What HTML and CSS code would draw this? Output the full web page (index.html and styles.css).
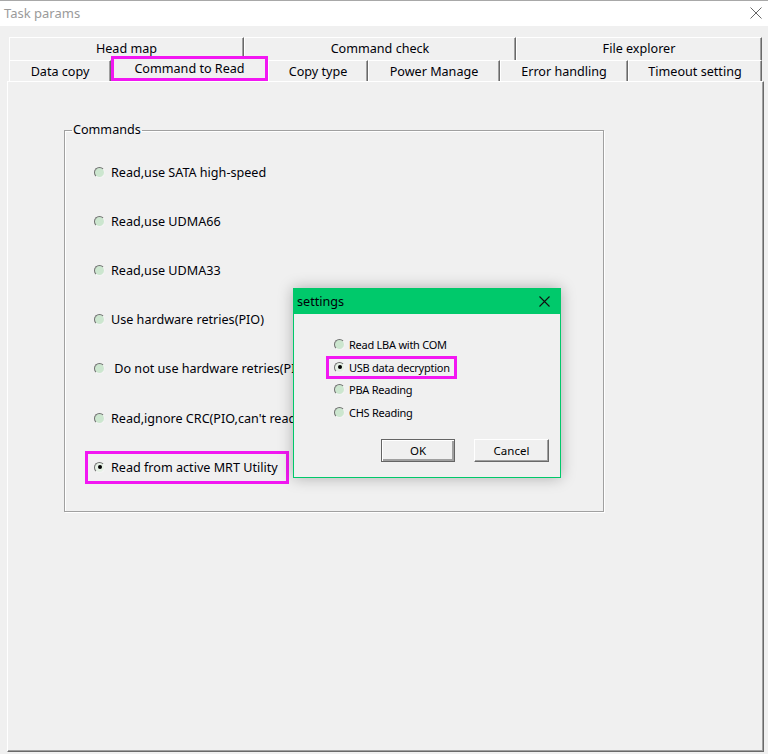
FILE: index.html
```html
<!DOCTYPE html>
<html lang="en">
<head>
  <meta charset="UTF-8">
  <title>Task params</title>
  <link rel="stylesheet" href="styles.css">
</head>
<body>
  <div class="window">
    <div class="titlebar">
      <span class="title">Task params</span>
      <svg class="close" width="12" height="12" viewBox="0 0 12 12">
        <path d="M0.5 0.5 L11.5 11.5 M11.5 0.5 L0.5 11.5" stroke="#666" stroke-width="1" fill="none"/>
      </svg>
    </div>

    <div class="tabctl">
      <div class="tabrow back">
        <div class="tab t-head">Head map</div>
        <div class="tab t-check">Command check</div>
        <div class="tab t-files">File explorer</div>
      </div>
      <div class="tabrow front">
        <div class="tab t-copy">Data copy</div>
        <div class="tab t-read active">Command to Read</div>
        <div class="tab t-type">Copy type</div>
        <div class="tab t-power">Power Manage</div>
        <div class="tab t-error">Error handling</div>
        <div class="tab t-timeout">Timeout setting</div>
      </div>

      <div class="panel">
        <fieldset class="group">
          <legend>Commands</legend>
          <ul class="options">
            <li><span class="opt"><i class="radio"></i>Read,use SATA high-speed</span></li>
            <li><span class="opt"><i class="radio"></i>Read,use UDMA66</span></li>
            <li><span class="opt"><i class="radio"></i>Read,use UDMA33</span></li>
            <li><span class="opt"><i class="radio"></i>Use hardware retries(PIO)</span></li>
            <li><span class="opt"><i class="radio"></i>&nbsp;Do not use hardware retries(PIO)</span></li>
            <li><span class="opt"><i class="radio"></i>Read,ignore CRC(PIO,can't read LBA)</span></li>
            <li><span class="opt marked"><i class="radio on"></i>Read from active MRT Utility</span></li>
          </ul>
        </fieldset>
      </div>
    </div>

    <div class="dialog">
      <div class="dlg-title">
        <span>settings</span>
        <svg width="11" height="11" viewBox="0 0 11 11">
          <path d="M0.5 0.5 L10.5 10.5 M10.5 0.5 L0.5 10.5" stroke="#111" stroke-width="1.1" fill="none"/>
        </svg>
      </div>
      <div class="dlg-body">
        <ul class="dlg-options">
          <li><span class="opt"><i class="radio"></i>Read LBA with COM</span></li>
          <li><span class="opt marked"><i class="radio on"></i>USB data decryption</span></li>
          <li><span class="opt"><i class="radio"></i>PBA Reading</span></li>
          <li><span class="opt"><i class="radio"></i>CHS Reading</span></li>
        </ul>
        <div class="dlg-buttons">
          <button class="btn default">OK</button>
          <button class="btn">Cancel</button>
        </div>
      </div>
    </div>
  </div>
</body>
</html>
```

FILE: styles.css
```css
body {
  margin: 0;
  background: #f0f0f0;
  font-family: "Noto Sans", "Open Sans", sans-serif;
  font-size: 12.6px;
  color: #000008;
}
.window {
  position: relative;
  width: 768px;
  height: 754px;
  overflow: hidden;
}
.titlebar {
  height: 25px;
  background: #fff;
  border-top: 1px solid #a8a8a8;
  display: flex;
  align-items: center;
  justify-content: space-between;
  padding: 0 6px 0 4px;
}
.title {
  color: #9a9a9a;
  font-size: 13px;
  margin-top: -1px;
}
.close {
  margin-top: -1px;
}
.tabctl {
  padding: 11px 4px 0 7px;
}
.tabrow {
  display: flex;
  margin-left: 2px;
}
.tabrow.back {
  height: 23px;
}
.tabrow.front {
  height: 21px;
  align-items: flex-end;
}
.tab {
  box-sizing: border-box;
  height: 100%;
  display: flex;
  align-items: center;
  justify-content: center;
  background: #f0f0f0;
  border-top: 1px solid #fff;
  border-left: 1px solid #fff;
  border-right: 1px solid #696969;
  box-shadow: inset -1px 0 0 #a0a0a0;
  white-space: nowrap;
}
.back .tab {
  padding-bottom: 2px;
}
.t-head { width: 235px; }
.t-check { width: 272px; }
.t-files { width: 246px; }
.t-copy { width: 102px; }
.t-read { width: 157px; }
.t-type { width: 100px; }
.t-power { width: 132px; }
.t-error { width: 128px; }
.t-timeout { width: 134px; }
.tab.active {
  height: 25px;
  border: 3px solid #f217f2;
  box-shadow: none;
  padding-bottom: 1px;
}
.panel {
  box-sizing: border-box;
  height: 671px;
  border-top: 1px solid #fff;
  border-left: 1px solid #fff;
  border-right: 1px solid #696969;
  border-bottom: 1px solid #696969;
  box-shadow: inset -1px -1px 0 #a0a0a0;
  padding: 39px 0 0 56px;
}
.group {
  box-sizing: border-box;
  width: 540px;
  height: 391px;
  margin: 0;
  padding: 0;
  border: 1px solid #a0a0a0;
  box-shadow: 1px 1px 0 #fff, inset 1px 1px 0 #fff;
}
.group legend {
  margin-left: 7px;
  padding: 0 1px;
  line-height: 18px;
}
.options {
  list-style: none;
  margin: 0;
  padding: 8.5px 0 0 29px;
}
.options li {
  height: 49.2px;
  display: flex;
  align-items: center;
}
.opt {
  display: inline-flex;
  align-items: center;
  white-space: nowrap;
}
.radio {
  box-sizing: border-box;
  width: 11px;
  height: 11px;
  border-radius: 50%;
  background: #cce6cf;
  border: 1px solid #a8a8a8;
  border-top-color: #707070;
  border-left-color: #707070;
  border-bottom-color: #f4f4f4;
  border-right-color: #f4f4f4;
  margin-right: 6px;
  display: inline-flex;
  align-items: center;
  justify-content: center;
  flex-shrink: 0;
}
.radio.on {
  background: #e6f1e6;
}
.radio.on::after {
  content: "";
  width: 4px;
  height: 4px;
  border-radius: 50%;
  background: #000;
}
.options .marked {
  box-sizing: border-box;
  height: 33px;
  margin-left: -9px;
  padding: 0 8px 0 6px;
  border: 3px solid #f217f2;
}
.dialog {
  position: absolute;
  left: 293px;
  top: 288px;
  box-sizing: border-box;
  width: 268px;
  height: 190px;
  border: 1px solid #00c86a;
  background: #f0f0f0;
  box-shadow: 0 0 14px rgba(0, 0, 0, 0.28);
  font-size: 11px;
  letter-spacing: -0.25px;
}
.dlg-title {
  height: 25px;
  background: #00c96b;
  display: flex;
  align-items: center;
  justify-content: space-between;
  padding: 0 10px 0 3px;
  font-size: 12.6px;
  letter-spacing: 0;
}
.dlg-body {
  padding: 19px 11px 0 0;
}
.dlg-options {
  list-style: none;
  margin: 0;
  padding: 0 0 0 40px;
}
.dlg-options li {
  height: 22.7px;
  display: flex;
  align-items: center;
}
.dlg-options .radio {
  margin-right: 4px;
}
.dlg-options .marked {
  box-sizing: border-box;
  height: 23px;
  margin-left: -8px;
  padding: 0 4px 0 5px;
  border: 3px solid #f217f2;
}
.dlg-buttons {
  display: flex;
  justify-content: flex-end;
  gap: 19px;
  margin-top: 15px;
}
.btn {
  box-sizing: border-box;
  width: 75px;
  height: 23px;
  font-family: inherit;
  font-size: 11.5px;
  color: #000;
  background: #f0f0f0;
  border: 1px solid;
  border-color: #fff #696969 #696969 #fff;
  box-shadow: inset -1px -1px 0 #a0a0a0;
  padding: 0;
}
.btn.default {
  width: 74px;
  border-color: #646464;
  box-shadow: inset 1px 1px 0 #fff, inset -2px -2px 0 #a0a0a0;
}
```
